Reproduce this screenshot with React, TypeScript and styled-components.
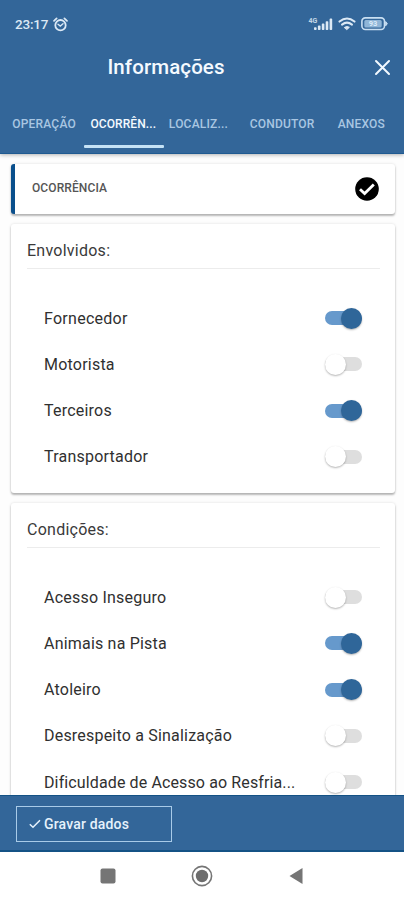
import React from 'react';
import styled, { createGlobalStyle } from 'styled-components';

const BLUE = '#336699';

const Global = createGlobalStyle`
  *, *::before, *::after { box-sizing: border-box; }
  html, body { margin: 0; padding: 0; background: #fff; }
  body { font-family: Roboto, "Liberation Sans", sans-serif; color: #303030; overflow: hidden; }
  button { font: inherit; background: none; border: 0; padding: 0; margin: 0; }
`;

const Screen = styled.div`
  width: 404px;
  height: 900px;
  display: flex;
  flex-direction: column;
  background: #fdfdfd;
  overflow: hidden;
`;

const Header = styled.header`
  flex: none;
  height: 154px;
  background: ${BLUE};
  border-bottom: 1px solid #1f5a91;
  box-shadow: 0 1px 4px rgba(0, 0, 0, 0.3);
  z-index: 1;
`;

const StatusBar = styled.div`
  height: 47px;
  padding: 1px 16px 0 15px;
  display: flex;
  align-items: center;
  color: #dce9f5;
`;

const Clock = styled.span`
  font-size: 13.5px;
  font-weight: 500;
  letter-spacing: -0.2px;
  width: 38px;
  white-space: nowrap;
`;

const StatusIcons = styled.div`
  margin-left: auto;
  display: flex;
  align-items: center;
  gap: 5px;
`;

const TitleBar = styled.div`
  height: 41px;
  display: grid;
  grid-template-columns: 60px 1fr 60px;
  align-items: center;
  padding: 0 7px 0 0;
`;

const Title = styled.h1`
  margin: 0 0 1px;
  padding-right: 65px;
  text-align: center;
  font-size: 20.5px;
  font-weight: 500;
  letter-spacing: 0.1px;
  color: #f5faff;
`;

const CloseButton = styled.button`
  display: flex;
  justify-content: flex-end;
  padding-right: 6px;
`;

const Tabs = styled.nav`
  height: 60px;
  padding: 0 3px 0 5px;
  display: grid;
  grid-template-columns: repeat(5, 79.2px);
`;

const Tab = styled.button<{ $active?: boolean }>`
  height: 60px;
  padding: 13px 0 0;
  font-size: 12px;
  font-weight: 500;
  text-align: center;
  white-space: nowrap;
  color: ${(p) => (p.$active ? '#f4faff' : '#a9c6e2')};
  display: flex;
  flex-direction: column;
  align-items: center;
`;

const TabLabel = styled.span<{ $spacing: number; $shift?: number }>`
  height: 46px;
  line-height: 47px;
  letter-spacing: ${(p) => p.$spacing}px;
  margin-left: ${(p) => p.$shift ?? 0}px;
`;

const Indicator = styled.span`
  width: 80px;
  height: 3px;
  margin-top: -2px;
  border-radius: 1px;
  background: #c5e2f6;
`;

const Content = styled.main`
  flex: 1;
  min-height: 0;
  overflow: hidden;
  padding: 10px 9px 0 11px;
`;

const Card = styled.section`
  background: #fff;
  border-radius: 3px;
  box-shadow: 0 2px 2px rgba(0, 0, 0, 0.26), 0 0 3px rgba(0, 0, 0, 0.13);
  margin-bottom: 10px;
  padding: 16px 15px 13px 16px;
`;

const StepCard = styled(Card)`
  height: 50px;
  padding: 0 16px 0 17px;
  border-left: 4px solid #0a4f8c;
  display: flex;
  align-items: center;
  justify-content: space-between;
`;

const StepLabel = styled.span`
  font-size: 12px;
  font-weight: 500;
  letter-spacing: 0.1px;
  color: #555;
  margin-top: -3px;
`;

const CardTitle = styled.h2`
  margin: 0;
  height: 29px;
  line-height: 21px;
  font-size: 16px;
  font-weight: 400;
  letter-spacing: 0.25px;
  color: #3a3a3a;
  border-bottom: 1px solid #ececec;
`;

const List = styled.div`
  padding: 26px 18px 0 17px;
`;

const Row = styled.label`
  height: 46.25px;
  display: flex;
  align-items: center;
  justify-content: space-between;
`;

const RowText = styled.span<{ $spacing: number }>`
  font-size: 16px;
  letter-spacing: ${(p) => p.$spacing}px;
  white-space: nowrap;
  color: #303030;
`;

const Track = styled.span<{ $on: boolean }>`
  flex: none;
  width: 37px;
  height: 14px;
  border-radius: 7px;
  background: ${(p) => (p.$on ? '#6699cc' : '#dedede')};
  display: flex;
  align-items: center;
  justify-content: ${(p) => (p.$on ? 'flex-end' : 'flex-start')};
`;

const Knob = styled.span<{ $on: boolean }>`
  width: 21px;
  height: 21px;
  flex: none;
  border-radius: 50%;
  background: ${(p) => (p.$on ? '#2f6699' : '#fff')};
  box-shadow: 0 1px 2px rgba(0, 0, 0, 0.3);
`;

const Footer = styled.footer`
  flex: none;
  height: 57px;
  background: ${BLUE};
  border-top: 1px solid #145285;
  border-bottom: 2px solid #145285;
  padding: 10px 16px;
`;

const SaveButton = styled.button`
  width: 156px;
  height: 36px;
  border: 1px solid #a9cbe8;
  display: flex;
  align-items: center;
  padding-left: 12px;
  gap: 3px;
  color: #e6f2fc;
  font-size: 14px;
  font-weight: 500;
  letter-spacing: 0.17px;
`;

const SystemNav = styled.nav`
  flex: none;
  height: 48px;
  background: #fff;
  padding: 0 100px 0 100px;
  display: flex;
  align-items: center;
  justify-content: space-between;
`;

type Option = { label: string; on: boolean; spacing: number };

const involved: Option[] = [
  { label: 'Fornecedor', on: true, spacing: 0.27 },
  { label: 'Motorista', on: false, spacing: 0.22 },
  { label: 'Terceiros', on: true, spacing: 0.22 },
  { label: 'Transportador', on: false, spacing: 0.22 },
];

const conditions: Option[] = [
  { label: 'Acesso Inseguro', on: false, spacing: 0.22 },
  { label: 'Animais na Pista', on: true, spacing: 0.2 },
  { label: 'Atoleiro', on: true, spacing: 0.22 },
  { label: 'Desrespeito a Sinalização', on: false, spacing: 0.2 },
  { label: 'Dificuldade de Acesso ao Resfria...', on: false, spacing: 0.12 },
];

const AlarmIcon = () => (
  <svg width="15" height="15" viewBox="0 0 15 15" fill="none" stroke="currentColor" strokeLinecap="round">
    <circle cx="7.5" cy="8.2" r="5.2" strokeWidth="1.8" />
    <path d="M1 3.8 3.6 1.4M14 3.8 11.4 1.4" strokeWidth="1.7" />
    <path d="M5 7.2 7.3 9 10 6.8" strokeWidth="1.4" />
  </svg>
);

const SignalIcon = () => (
  <svg width="25" height="16" viewBox="0 0 25 16" fill="currentColor">
    <text x="0.5" y="6.5" fontSize="7" fontWeight="700" fontFamily="Roboto, sans-serif" opacity="0.85">4G</text>
    <rect x="6" y="11.3" width="2.6" height="2.7" rx="0.8" />
    <rect x="9.9" y="9.6" width="2.6" height="4.4" rx="0.8" />
    <rect x="13.8" y="7.6" width="2.6" height="6.4" rx="0.8" />
    <rect x="17.7" y="5.2" width="2.6" height="8.8" rx="0.8" />
    <rect x="21.6" y="2.6" width="2.6" height="11.4" rx="0.8" />
  </svg>
);

const WifiIcon = () => (
  <svg width="18" height="14" viewBox="0 0 18 14" fill="none" stroke="currentColor" strokeWidth="2" strokeLinecap="round">
    <path d="M1.5 4.6Q9-1.6 16.5 4.6" />
    <path d="M4 7.6Q9 3.6 14 7.6" />
    <path d="M6.6 10.3Q9 8.6 11.4 10.3L9 12.4Z" fill="currentColor" strokeWidth="1" />
  </svg>
);

const BatteryIcon = () => (
  <svg width="27" height="14" viewBox="0 0 27 14" fill="none">
    <rect x="0.9" y="0.9" width="22.6" height="11.6" rx="3.4" stroke="#c9dff2" strokeWidth="1.6" />
    <rect x="3.3" y="3" width="17.4" height="7.4" rx="1.5" fill="#8fb5d7" />
    <path d="M24.7 4.6 26.3 6.7 24.7 8.8Z" fill="#c9dff2" stroke="#c9dff2" />
    <text x="12" y="9.3" textAnchor="middle" fontSize="7.5" fontWeight="700" fontFamily="Roboto, sans-serif" fill="#dcebf8">93</text>
  </svg>
);

const CloseIcon = () => (
  <svg width="17" height="17" viewBox="0 0 17 17" stroke="#f2f9ff" strokeWidth="2" strokeLinecap="round">
    <path d="M2 2 15 15M15 2 2 15" />
  </svg>
);

const CheckCircle = () => (
  <svg width="24" height="24" viewBox="0 0 24 24">
    <circle cx="12" cy="12" r="11.8" fill="#000" />
    <path d="M5 12.2 9.6 16.6 18.8 7.4" fill="none" stroke="#fff" strokeWidth="2.8" />
  </svg>
);

const CheckIcon = () => (
  <svg width="12" height="10" viewBox="0 0 12 10" fill="none" stroke="currentColor" strokeWidth="1.5">
    <path d="M0.8 5.2 4 8.3 11 1.2" />
  </svg>
);

const OptionCard = ({ title, options }: { title: string; options: Option[] }) => (
  <Card>
    <CardTitle>{title}</CardTitle>
    <List>
      {options.map((o) => (
        <Row key={o.label}>
          <RowText $spacing={o.spacing}>{o.label}</RowText>
          <Track $on={o.on} role="switch" aria-checked={o.on}>
            <Knob $on={o.on} />
          </Track>
        </Row>
      ))}
    </List>
  </Card>
);

export default function App() {
  return (
    <>
      <Global />
      <Screen>
        <Header>
          <StatusBar>
            <Clock>23:17</Clock>
            <AlarmIcon />
            <StatusIcons>
              <SignalIcon />
              <WifiIcon />
              <BatteryIcon />
            </StatusIcons>
          </StatusBar>
          <TitleBar>
            <span />
            <Title>Informações</Title>
            <CloseButton aria-label="Fechar">
              <CloseIcon />
            </CloseButton>
          </TitleBar>
          <Tabs>
            <Tab><TabLabel $spacing={0.2} $shift={-1}>OPERAÇÃO</TabLabel></Tab>
            <Tab $active>
              <TabLabel $spacing={0.1} $shift={-1}>OCORRÊN...</TabLabel>
              <Indicator />
            </Tab>
            <Tab><TabLabel $spacing={0.2} $shift={-9}>LOCALIZ...</TabLabel></Tab>
            <Tab><TabLabel $spacing={0.2}>CONDUTOR</TabLabel></Tab>
            <Tab><TabLabel $spacing={0.2}>ANEXOS</TabLabel></Tab>
          </Tabs>
        </Header>
        <Content>
          <StepCard>
            <StepLabel>OCORRÊNCIA</StepLabel>
            <CheckCircle />
          </StepCard>
          <OptionCard title="Envolvidos:" options={involved} />
          <OptionCard title="Condições:" options={conditions} />
        </Content>
        <Footer>
          <SaveButton>
            <CheckIcon />
            Gravar dados
          </SaveButton>
        </Footer>
        <SystemNav>
          <svg width="16" height="16" viewBox="0 0 16 16"><rect x="0.5" y="0.5" width="15" height="15" rx="2" fill="#757575" /></svg>
          <svg width="22" height="22" viewBox="0 0 22 22">
            <circle cx="11" cy="11" r="9.6" fill="none" stroke="#757575" strokeWidth="1.6" />
            <circle cx="11" cy="11" r="6.2" fill="#6d6d6d" />
          </svg>
          <svg width="16" height="18" viewBox="0 0 16 18"><path d="M1.5 9 14.5 1V17Z" fill="#757575" /></svg>
        </SystemNav>
      </Screen>
    </>
  );
}
